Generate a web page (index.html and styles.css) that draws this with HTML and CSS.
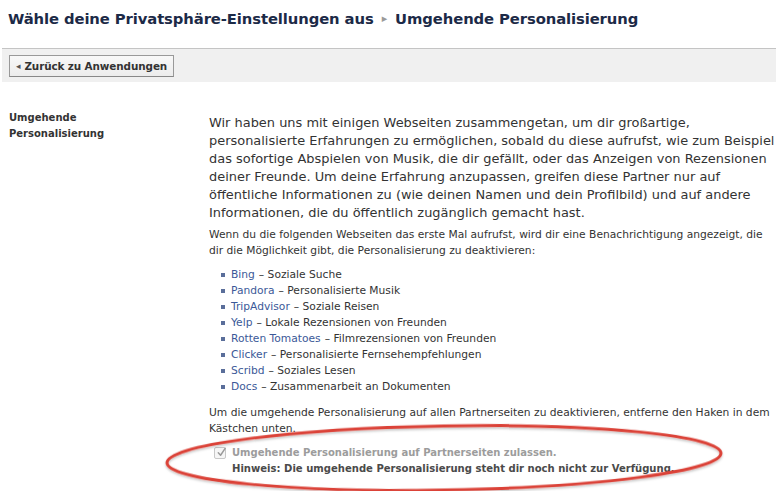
FILE: index.html
```html
<!DOCTYPE html>
<html lang="de">
<head>
<meta charset="utf-8">
<link rel="stylesheet" href="styles.css">
</head>
<body>
<h1 class="title">Wähle deine Privatsphäre-Einstellungen aus <span class="crumb-arrow">▸</span> Umgehende Personalisierung</h1>
<div class="toolbar">
  <button class="back-btn"><span class="back-arrow">◂</span>Zurück zu Anwendungen</button>
</div>
<div class="section">
  <div class="label">Umgehende Personalisierung</div>
  <div class="content">
    <p class="lead">Wir haben uns mit einigen Webseiten zusammengetan, um dir großartige, personalisierte Erfahrungen zu ermöglichen, sobald du diese aufrufst, wie zum Beispiel das sofortige Abspielen von Musik, die dir gefällt, oder das Anzeigen von Rezensionen deiner Freunde. Um deine Erfahrung anzupassen, greifen diese Partner nur auf öffentliche Informationen zu (wie deinen Namen und dein Profilbild) und auf andere Informationen, die du öffentlich zugänglich gemacht hast.</p>
    <p class="small">Wenn du die folgenden Webseiten das erste Mal aufrufst, wird dir eine Benachrichtigung angezeigt, die dir die Möglichkeit gibt, die Personalisierung zu deaktivieren:</p>
    <ul class="partners">
      <li><a>Bing</a> – Soziale Suche</li>
      <li><a>Pandora</a> – Personalisierte Musik</li>
      <li><a>TripAdvisor</a> – Soziale Reisen</li>
      <li><a>Yelp</a> – Lokale Rezensionen von Freunden</li>
      <li><a>Rotten Tomatoes</a> – Filmrezensionen von Freunden</li>
      <li><a>Clicker</a> – Personalisierte Fernsehempfehlungen</li>
      <li><a>Scribd</a> – Soziales Lesen</li>
      <li><a>Docs</a> – Zusammenarbeit an Dokumenten</li>
    </ul>
    <p class="small tail">Um die umgehende Personalisierung auf allen Partnerseiten zu deaktivieren, entferne den Haken in dem Kästchen unten.</p>
    <div class="optin">
      <span class="checkbox"><svg viewBox="0 0 12 12" width="11" height="11"><path d="M2.5 6.2 L5 9 L10 1.5" fill="none" stroke="#9a9a9a" stroke-width="1.6" stroke-linecap="round" stroke-linejoin="round"/></svg></span>
      <div class="optin-text">
        <div class="check-label">Umgehende Personalisierung auf Partnerseiten zulassen.</div>
        <div class="hint">Hinweis: Die umgehende Personalisierung steht dir noch nicht zur Verfügung.</div>
      </div>
    </div>
  </div>
</div>
<svg class="annotation" width="784" height="491" viewBox="0 0 784 491">
  <defs>
    <filter id="sh" x="-10%" y="-50%" width="120%" height="200%">
      <feDropShadow dx="0" dy="1.5" stdDeviation="1.2" flood-color="#000" flood-opacity="0.25"/>
    </filter>
  </defs>
  <ellipse cx="444" cy="458" rx="277" ry="32" transform="rotate(-1 444 458)" fill="none" stroke="#db4238" stroke-width="3" filter="url(#sh)"/>
</svg>
</body>
</html>
```

FILE: styles.css
```css
html, body {
  margin: 0;
  padding: 0;
  background: #fff;
}
body {
  font-family: "DejaVu Sans", "Liberation Sans", sans-serif;
  color: #333;
  width: 784px;
  height: 491px;
  overflow: hidden;
  position: relative;
}
.title {
  margin: 0;
  padding: 10px 8px 0 8px;
  height: 38px;
  box-sizing: border-box;
  font-size: 14.8px;
  font-weight: bold;
  color: #1c2a47;
  letter-spacing: -0.1px;
}
.crumb-arrow {
  color: #9a9a9a;
  font-size: 11px;
  margin: 0 3px;
  vertical-align: 2px;
}
.toolbar {
  margin: 10px 8px 0 2px;
  border-top: 1px solid #c4c4c4;
  background: #f0f0f0;
  height: 34px;
  box-sizing: border-box;
  padding: 6px 0 0 7px;
}
.back-btn {
  font-family: inherit;
  font-size: 10.4px;
  font-weight: bold;
  letter-spacing: -0.1px;
  color: #333;
  height: 22px;
  padding: 0 6px 0 6px;
  border: 1px solid #999;
  border-bottom-color: #888;
  background: linear-gradient(#f8f8f8, #ececec);
  display: flex;
  align-items: center;
  gap: 4px;
}
.back-arrow {
  font-size: 9px;
  color: #555;
}
.section {
  display: grid;
  grid-template-columns: 200px 566px;
  padding: 32px 0 0 9px;
}
.label {
  font-size: 10px;
  font-weight: bold;
  color: #333;
  line-height: 16px;
  width: 110px;
  margin-top: -4px;
}
.lead {
  margin: 0;
  font-size: 12.95px;
  line-height: 18px;
  color: #333;
}
.small {
  margin: 5px 0 0 0;
  font-size: 10.7px;
  line-height: 16px;
  color: #333;
}
.partners {
  list-style: none;
  margin: 8px 0 0 0;
  padding: 0 0 0 12px;
  font-size: 10.7px;
  line-height: 16px;
}
.partners li {
  display: flex;
  align-items: center;
}
.partners li::before {
  content: "";
  width: 4px;
  height: 4px;
  background: #5a6e9a;
  margin-right: 6px;
  flex: none;
}
.partners a {
  color: #3b5998;
  margin-right: 4px;
}
.small.tail {
  margin-top: 10px;
}
.optin {
  margin-top: 8px;
  padding-left: 5px;
  font-size: 10.7px;
  line-height: 16px;
  display: flex;
  align-items: flex-start;
  gap: 6px;
}
.checkbox {
  width: 12px;
  height: 12px;
  margin-top: 2px;
  border: 1px solid #c8c8c8;
  border-radius: 2px;
  background: #f6f6f6;
  display: flex;
  align-items: center;
  justify-content: center;
  box-sizing: border-box;
  flex: none;
}
.checkbox svg {
  margin-top: -2px;
  margin-left: 2px;
  overflow: visible;
}
.check-label {
  color: #9c9c9c;
  font-size: 10px;
  font-weight: bold;
}
.hint {
  font-size: 10.05px;
  font-weight: bold;
  color: #4a4a4a;
}
.annotation {
  position: absolute;
  left: 0;
  top: 0;
  pointer-events: none;
}
```
